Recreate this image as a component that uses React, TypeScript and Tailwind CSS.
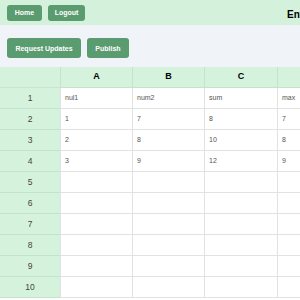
import React from "react";

const cols = ["A", "B", "C", "D"];
const data: string[][] = [
  ["nul1", "num2", "sum", "max"],
  ["1", "7", "8", "7"],
  ["2", "8", "10", "8"],
  ["3", "9", "12", "9"],
];

export default function App() {
  const rows = Array.from({ length: 10 }, (_, i) => i + 1);
  return (
    <div className="w-[300px] h-[300px] overflow-hidden bg-white" style={{ fontFamily: '"Liberation Sans", Arial, sans-serif' }}>
      <div className="h-[25px] bg-[#d4f1dc] flex items-center pl-[7px] gap-[6px] relative">
        <button className="h-[16px] w-[35px] rounded-[3px] bg-[#5a9b6f] text-white text-[7px] font-semibold leading-none">Home</button>
        <button className="h-[16px] w-[37px] rounded-[3px] bg-[#5a9b6f] text-white text-[7px] font-semibold leading-none">Logout</button>
        <div className="absolute left-[287px] top-[7px] text-[10px] font-bold text-black whitespace-nowrap">Enter</div>
      </div>
      <div className="h-[42px] bg-[#f0f4f8] flex items-center pl-[7px] gap-[6px] pt-[4px]">
        <button className="h-[20px] w-[74px] rounded-[3px] bg-[#5a9b6f] text-white text-[7px] font-semibold leading-none">Request Updates</button>
        <button className="h-[20px] w-[42px] rounded-[3px] bg-[#5a9b6f] text-white text-[7px] font-semibold leading-none">Publish</button>
      </div>
      <div className="grid grid-cols-[60px_72px_72px_73px_72px]">
        <div className="h-[21px] bg-[#d4f2dc] border-b border-[#c9e6d1]"></div>
        {cols.map((c) => (
          <div key={c} className="h-[21px] bg-[#d4f2dc] border-l border-b border-[#c4e3cc] flex items-center justify-center text-[9px] font-bold text-black">
            {c}
          </div>
        ))}
        {rows.map((r) => (
          <React.Fragment key={r}>
            <div className="h-[21px] bg-[#d4f2dc] border-b border-[#c4e3cc] flex items-center justify-center text-[8.5px] text-[#444]">
              {r}
            </div>
            {cols.map((c, ci) => (
              <div key={c} className="h-[21px] bg-white border-l border-b border-[#e2e2e2] flex items-center pl-[4px] text-[7px] text-[#555]">
                {data[r - 1]?.[ci] ?? ""}
              </div>
            ))}
          </React.Fragment>
        ))}
      </div>
    </div>
  );
}
